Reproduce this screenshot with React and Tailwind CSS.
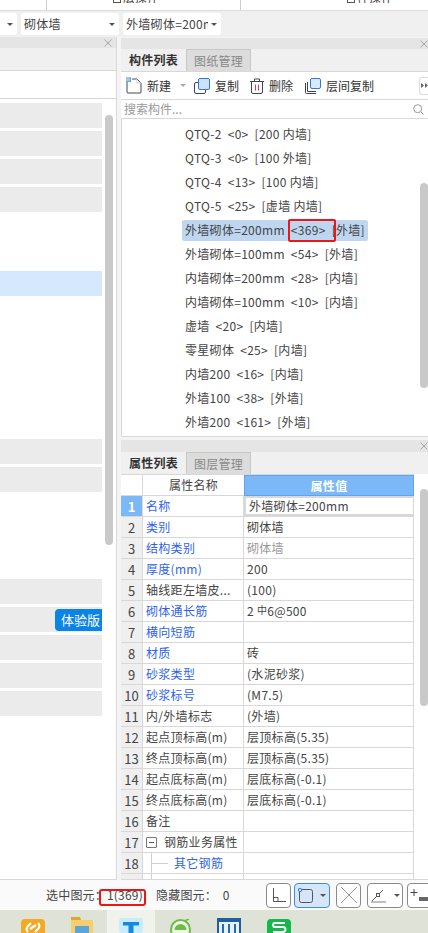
const font = { fontFamily: '"Noto Sans CJK SC", "Noto Sans", sans-serif' };

const items = [
  ["QTQ-2", "<0>", "[200 内墙]"],
  ["QTQ-3", "<0>", "[100 外墙]"],
  ["QTQ-4", "<13>", "[100 内墙]"],
  ["QTQ-5", "<25>", "[虚墙 内墙]"],
  ["外墙砌体=200mm", "<369>", "[外墙]"],
  ["外墙砌体=100mm", "<54>", "[外墙]"],
  ["内墙砌体=200mm", "<28>", "[内墙]"],
  ["内墙砌体=100mm", "<10>", "[内墙]"],
  ["虚墙", "<20>", "[内墙]"],
  ["零星砌体", "<25>", "[内墙]"],
  ["内墙200", "<16>", "[内墙]"],
  ["外墙100", "<38>", "[外墙]"],
  ["外墙200", "<161>", "[外墙]"],
];

const rebar = (
  <span className="whitespace-pre">
    2 <span className="relative top-[-2px] text-[10px]">中</span>6@500
  </span>
);

const rows = [
  ["名称", "外墙砌体=200mm", 1],
  ["类别", "砌体墙", 1],
  ["结构类别", "砌体墙", 1, 1],
  ["厚度(mm)", "200", 1],
  ["轴线距左墙皮...", "(100)", 0],
  ["砌体通长筋", rebar, 1],
  ["横向短筋", "", 1],
  ["材质", "砖", 1],
  ["砂浆类型", "(水泥砂浆)", 1],
  ["砂浆标号", "(M7.5)", 1],
  ["内/外墙标志", "(外墙)", 0],
  ["起点顶标高(m)", "层顶标高(5.35)", 0],
  ["终点顶标高(m)", "层顶标高(5.35)", 0],
  ["起点底标高(m)", "层底标高(-0.1)", 0],
  ["终点底标高(m)", "层底标高(-0.1)", 0],
  ["备注", "", 0],
];

function Close({ className = "" }) {
  return (
    <svg className={className} width="8" height="8" viewBox="0 0 8 8" stroke="#a8a8a8" strokeWidth="1">
      <path d="M0.5 0.5 7.5 7.5M7.5 0.5 0.5 7.5" />
    </svg>
  );
}

function Caret({ color = "#555" }) {
  return <span className="block h-0 w-0 shrink-0 border-x-[3px] border-t-[3px] border-x-transparent" style={{ borderTopColor: color }} />;
}

function Select({ w, text, tw = "" }) {
  return (
    <div className={`${w} flex h-[22px] shrink-0 items-center justify-between rounded-[3px] bg-white pl-[3px] pr-[4px] text-[12px] tracking-[0.3px] text-[#444]`}>
      <span className={`${tw} overflow-hidden whitespace-nowrap`}>{text}</span>
      <Caret />
    </div>
  );
}

function Tabs({ a, b }) {
  return (
    <div className="flex h-[22px] shrink-0 items-stretch bg-[#f0f0f0] text-[12px]">
      <div className="flex w-[65px] items-center justify-center font-bold tracking-[0.2px] text-[#333]">{a}</div>
      <div className="flex w-[65px] items-center justify-center border-x border-t border-[#c8c8c8] bg-[#dcdcdc] tracking-[0.2px] text-[#888]">{b}</div>
    </div>
  );
}

function ToolIcon({ kind }) {
  if (kind === "new")
    return (
      <svg width="16" height="17" viewBox="0 0 16 17" fill="none">
        <path d="M1 4.5V15a1 1 0 0 0 1 1h12a1 1 0 0 0 1-1V6l-4-4H6" stroke="#3c4658" />
        <path d="M11 2v4h4" stroke="#c5cad2" />
        <rect x="0" y="0" width="5" height="5" fill="#3f7fe6" />
        <path d="M1 0v5M3 0v5M0 1h5M0 3h5" stroke="#fff" strokeWidth=".6" />
      </svg>
    );
  if (kind === "copy")
    return (
      <svg width="16" height="16" viewBox="0 0 16 16" fill="none">
        <rect x="0.5" y="4.5" width="11" height="11" rx="1.5" stroke="#3c4658" />
        <rect x="4.5" y="0.5" width="11" height="11" rx="1.5" fill="#cfe2fb" stroke="#2f7be0" />
      </svg>
    );
  if (kind === "del")
    return (
      <svg width="14" height="16" viewBox="0 0 14 16" fill="none">
        <path d="M0 3.5h14M4.5 3V1h5v2" stroke="#3c4658" />
        <path d="M1.5 3.5V14a1.5 1.5 0 0 0 1.5 1.5h8a1.5 1.5 0 0 0 1.5-1.5V3.5" stroke="#3c4658" />
        <path d="M5.5 6.5v6M8.5 6.5v6" stroke="#e53935" />
      </svg>
    );
  return (
    <svg width="16" height="16" viewBox="0 0 16 16" fill="none">
      <path d="M0.5 5v9.5a1 1 0 0 0 1 1H11" stroke="#3c4658" />
      <path d="M2.5 4v9.5H11" stroke="#3c4658" />
      <rect x="5.5" y="0.5" width="10" height="10" rx="1.5" fill="#dbe9fc" stroke="#2f7be0" />
    </svg>
  );
}

function Tool({ kind, label, caret, className = "" }) {
  return (
    <div className={`flex items-center gap-[5px] text-[12px] text-[#333] ${className}`}>
      <ToolIcon kind={kind} />
      <span>{label}</span>
      {caret && <span className="ml-[4px]"><Caret color="#aaa" /></span>}
    </div>
  );
}

function GrayRow({ children }) {
  return <div className="mr-[14px] flex h-[25px] shrink-0 items-center justify-end bg-[#ebebeb]">{children}</div>;
}

function LeftPanel() {
  return (
    <div className="relative flex w-[117px] shrink-0 flex-col overflow-hidden border-r border-b border-[#d8d8d8] bg-white">
      <div className="flex h-[11px] shrink-0 items-center justify-end bg-[#e5e5e5] pr-[4px]"><Close /></div>
      <div className="h-[23px] shrink-0 border-b border-[#d8d8d8] bg-[#f0f0f0]" />
      <div className="h-[28px] shrink-0 border-b border-[#d8d8d8] bg-white" />
      <div className="flex flex-col gap-[3px] pt-[4px]">
        <GrayRow /><GrayRow /><GrayRow /><GrayRow />
        <div className="h-[53px] shrink-0" />
        <div className="mr-[14px] h-[25px] shrink-0 bg-[#d5e8fe]" />
        <div className="h-[137px] shrink-0" />
        <GrayRow /><GrayRow />
        <div className="h-[81px] shrink-0" />
        <GrayRow />
        <GrayRow>
          <span className="flex h-[22px] w-[47px] items-center justify-end rounded-l-[4px] bg-[#0a84e6] pr-[2px] text-[13px] text-white">体验版</span>
        </GrayRow>
        <GrayRow /><GrayRow /><GrayRow />
      </div>
      <div className="absolute left-[105px] top-[78px] h-[430px] w-[8px] rounded-[4px] bg-[#c9c9c9]" />
    </div>
  );
}

function ListPanel() {
  return (
    <div className="relative flex h-[399px] shrink-0 flex-col border-b border-[#d8d8d8]">
      <div className="flex h-[11px] shrink-0 items-center justify-end bg-[#e5e5e5]"><Close /></div>
      <Tabs a="构件列表" b="图纸管理" />
      <div className="flex h-[29px] shrink-0 items-center border-y border-[#d8d8d8] bg-white pl-[5px]">
        <Tool kind="new" label="新建" caret />
        <Tool kind="copy" label="复制" className="ml-[8px]" />
        <Tool kind="del" label="删除" className="ml-[11px]" />
        <Tool kind="layer" label="层间复制" className="ml-[12px]" />
        <span className="ml-auto flex h-[18px] w-[9px] items-center justify-center rounded-l-[3px] border-y border-l border-[#ddd] bg-white">
          <svg width="7" height="5" viewBox="0 0 7 5" fill="#666"><path d="M0 0 3 2.500 0 5ZM4 0 7 2.500 4 5Z" /></svg>
        </span>
      </div>
      <div className="flex h-[19px] shrink-0 items-center justify-between border-b border-[#d8d8d8] bg-white pl-[3px] pr-[4px] text-[12px] text-[#999]">
        <span>搜索构件...</span>
        <svg width="11" height="11" viewBox="0 0 11 11" fill="none" stroke="#999"><circle cx="4.700" cy="4.700" r="4" /><path d="M7.700 7.700 10.500 10.500" /></svg>
      </div>
      <div className="flex flex-1 flex-col border-l border-[#d8d8d8] bg-white pt-[3px] text-[12px] tracking-[0.3px] text-[#444]">
        {items.map(([a, b, c], i) => {
          const sel = i === 4;
          return (
            <div key={a} className="flex h-[24px] shrink-0 items-center pl-[60px]">
              <div className={`relative flex h-[21px] items-center whitespace-pre rounded-[2px] px-[3px] ${sel ? "bg-[#bed6f0]" : ""}`}>
                {a}  {b}  {c}
                {sel && <span className="absolute left-[106px] top-[-1px] h-[23px] w-[48px] rounded-[2px] border-[2px] border-[#f01414]" />}
              </div>
            </div>
          );
        })}
      </div>
      <div className="absolute right-0 top-[145px] h-[205px] w-[8px] rounded-[4px] bg-[#c9c9c9]" />
    </div>
  );
}

function PropRow({ n, name, val, blue, gray, first, tree, children }) {
  return (
    <div className="flex h-[21px] shrink-0 border-b border-[#d8d8d8] text-[12px] leading-none tracking-[0.3px]">
      <div className={`flex w-[22px] shrink-0 items-center justify-center border-r border-[#d8d8d8] text-[13px] tracking-normal ${first ? "bg-[#7cb8f7] font-bold text-white" : "bg-[#efefef] text-[#444]"}`}>{n}</div>
      <div className={`relative flex w-[101px] shrink-0 items-center overflow-hidden whitespace-nowrap border-r border-[#d8d8d8] pl-[3px] ${blue ? "text-[#2f63e8]" : "text-[#444]"}`}>
        {tree && <span className="absolute left-[8px] top-0 h-full w-px bg-[#d0d0d0]" />}
        {children || name}
      </div>
      <div className={`flex min-w-0 flex-1 items-center border-r border-[#d8d8d8] pl-[3px] ${gray ? "text-[#999]" : "text-[#444]"} ${first ? "border-2 border-[#777] pl-[2px]" : ""}`}>{val}</div>
    </div>
  );
}

function PropPanel() {
  return (
    <div className="relative flex min-h-0 flex-1 flex-col overflow-hidden border-b border-[#d8d8d8] bg-white">
      <div className="flex h-[12px] shrink-0 items-center justify-end bg-[#e5e5e5]"><Close /></div>
      <Tabs a="属性列表" b="图层管理" />
      <div className="mr-[14px] flex shrink-0 flex-col border-t border-[#d8d8d8] bg-white">
        <div className="flex h-[21px] shrink-0 text-[12px] tracking-[0.3px]">
          <div className="w-[22px] shrink-0 border-r border-b border-[#d8d8d8] bg-white" />
          <div className="flex w-[101px] shrink-0 items-center justify-center border-b border-[#d8d8d8] text-[#444]">属性名称</div>
          <div className="flex flex-1 items-center justify-center border border-[#5fa5ee] bg-[#7cb8f7] font-bold text-white">属性值</div>
        </div>
        {rows.map(([name, val, blue, gray], i) => (
          <PropRow key={name} n={i + 1} name={name} val={val} blue={!!blue} gray={!!gray} first={i === 0} />
        ))}
        <PropRow n={17} val="">
          <span className="mr-[7px] flex h-[11px] w-[11px] shrink-0 items-center justify-center rounded-[1px] border border-[#777]">
            <span className="h-px w-[5px] bg-[#555]" />
          </span>
          钢筋业务属性
        </PropRow>
        <PropRow n={18} val="" blue tree>
          <span className="ml-[6px] mr-[6px] h-px w-[16px] shrink-0 bg-[#d0d0d0]" />
          其它钢筋
        </PropRow>
        <PropRow n="" val="" tree />
      </div>
      <div className="absolute right-0 top-[49px] h-[217px] w-[8px] rounded-[4px] bg-[#c9c9c9]" />
    </div>
  );
}

function StatusBtn({ w, active, children }) {
  return (
    <div className={`${w} flex h-[25px] shrink-0 items-center justify-center gap-[7px] rounded-[4px] border ${active ? "border-[#3b8de8] bg-[#d5e6fb]" : "border-[#8a8a8a] bg-white"}`}>
      {children}
    </div>
  );
}

function StatusBar() {
  return (
    <div className="flex h-[30px] shrink-0 items-center overflow-hidden bg-[#fafafa] pl-[46px] text-[12px] tracking-[0.2px] text-[#444]">
      <span className="w-[53px] shrink-0 overflow-hidden whitespace-nowrap">选中图元：</span>
      <span className="relative w-[47px] shrink-0 whitespace-nowrap pl-[8px]">
        1(369)
        <span className="absolute inset-x-0 top-[3px] h-[17px] rounded-[3px] border-[2.5px] border-[#f01414]" />
      </span>
      <span className="ml-[10px] w-[110px] shrink-0 whitespace-pre">隐藏图元：  0</span>
      <div className="flex items-center gap-[3px]">
        <StatusBtn w="w-[25px]">
          <svg width="14" height="14" viewBox="0 0 14 14" fill="none" stroke="#555"><path d="M1.500 0v13.500H14M1.500 9.500H6v4" /></svg>
        </StatusBtn>
        <StatusBtn w="w-[36px]" active>
          <svg width="15" height="15" viewBox="0 0 15 15" fill="none">
            <rect x="1.500" y="1.500" width="13" height="13" rx="2" stroke="#555" />
            <circle cx="2" cy="2" r="1.700" fill="#d5e6fb" stroke="#2f7be0" />
          </svg>
          <Caret />
        </StatusBtn>
        <div className="ml-[3px]">
          <StatusBtn w="w-[25px]">
            <svg width="18" height="18" viewBox="0 0 18 18" fill="none" stroke="#999"><path d="M1 1 17 17M17 1 1 17" /></svg>
          </StatusBtn>
        </div>
        <div className="ml-[3px]">
          <StatusBtn w="w-[36px]">
            <svg width="16" height="15" viewBox="0 0 16 15" fill="none">
              <path d="M0 14h15" stroke="#aaa" strokeWidth="1.500" />
              <path d="M1 13 6 8M8 6 12 2" stroke="#555" />
              <rect x="5.500" y="5.500" width="3" height="3" stroke="#555" />
            </svg>
            <Caret />
          </StatusBtn>
        </div>
        <div className="ml-px">
          <StatusBtn w="w-[25px]">
            <svg width="20" height="15" viewBox="0 0 20 15" fill="none">
              <path d="M4 1v7M0.500 4.500h7" stroke="#444" />
              <rect x="9" y="9" width="10" height="4" fill="#666" />
            </svg>
          </StatusBtn>
        </div>
      </div>
    </div>
  );
}

function Taskbar() {
  return (
    <div className="flex h-[23px] shrink-0 items-end overflow-hidden bg-[#dfe2d6]">
      <svg className="ml-[21px] shrink-0" width="24" height="14" viewBox="0 0 24 14">
        <path d="M4 0h16a4 4 0 0 1 4 4v10H0V4a4 4 0 0 1 4-4Z" fill="#f7a823" />
        <path d="M7 13a4 4 0 0 1 0-6l3-3M17 4a4 4 0 0 1 0 6l-3 3M9 10l6-4" fill="none" stroke="#fff" strokeWidth="2.200" />
      </svg>
      <svg className="ml-[26px] shrink-0" width="22" height="16" viewBox="0 0 22 16">
        <path d="M0 0h9l1 3h12v13H0Z" fill="#e0a52c" />
        <rect y="3" width="22" height="13" fill="#f5cf6b" />
        <rect x="4" y="9" width="14" height="7" fill="#5aa5dc" />
      </svg>
      <div className="ml-[14px] flex h-full w-[48px] shrink-0 items-end justify-center bg-[#f0f2ec]">
        <svg width="24" height="15" viewBox="0 0 24 15">
          <rect width="24" height="15" rx="3" fill="#c8ecfc" />
          <path d="M4 4h16v3.500h-5.500V15h-5V7.500H4Z" fill="#1489e0" />
        </svg>
      </div>
      <svg className="ml-[15px] shrink-0" width="21" height="14" viewBox="0 0 21 14">
        <circle cx="10.500" cy="10.500" r="9.500" fill="#f1f6e6" stroke="#6cbd45" strokeWidth="2" />
        <path d="M4.500 11a6 6 0 0 1 12 0Z" fill="#6cbd45" />
        <path d="M14 2 19 0" stroke="#6cbd45" strokeWidth="1.500" />
      </svg>
      <svg className="ml-[26px] shrink-0" width="24" height="15" viewBox="0 0 24 15">
        <rect width="24" height="15" fill="#1f5f9e" />
        <rect x="2" y="4" width="20" height="11" fill="#e8f0f6" />
        <path d="M6 6v9M12 6v9M18 6v9" stroke="#1f6fb0" strokeWidth="2" />
      </svg>
      <svg className="ml-[26px] shrink-0" width="24" height="14" viewBox="0 0 24 14">
        <path d="M4 0h16a4 4 0 0 1 4 4v10H0V4a4 4 0 0 1 4-4Z" fill="#12b84a" />
        <path d="M18 4H8a2 2 0 0 0 0 4h8a2.500 2.500 0 0 1 0 5H6" fill="none" stroke="#fff" strokeWidth="2" />
      </svg>
    </div>
  );
}

function TopSliver({ label, pl }) {
  return (
    <div className={`flex items-start gap-[2px] ${pl}`}>
      <span className="h-[3px] w-[8px] shrink-0 border-x border-b border-[#555]" />
      <span className="mt-[-9px] whitespace-nowrap">{label}</span>
    </div>
  );
}

export default function App() {
  return (
    <div className="flex h-[933px] w-[428px] flex-col overflow-hidden bg-[#f4f4f4]" style={font}>
      <div className="flex h-[11px] shrink-0 overflow-hidden border-b border-[#dcdcdc] bg-white text-[12px] leading-none text-[#444]">
        <div className="w-[47px] border-r border-[#ccc]" />
        <div className="w-[194px] border-r border-[#ccc]">
          <TopSliver label="层操作" pl="pl-[66px]" />
        </div>
        <div className="flex-1">
          <TopSliver label="件操作" pl="pl-[106px]" />
        </div>
      </div>
      <div className="flex h-[26px] shrink-0 items-center gap-[4px] bg-[#f0f0f0]">
        <div className="ml-[-5px]"><Select w="w-[22px]" text="" /></div>
        <Select w="w-[98px]" text="砌体墙" />
        <Select w="w-[98px]" text="外墙砌体=200mm" tw="w-[82px]" />
      </div>
      <div className="flex min-h-0 flex-1 gap-[4px]">
        <LeftPanel />
        <div className="flex min-w-0 flex-1 flex-col pt-px">
          <ListPanel />
          <div className="h-[3px] shrink-0" />
          <PropPanel />
        </div>
      </div>
      <StatusBar />
      <Taskbar />
    </div>
  );
}
